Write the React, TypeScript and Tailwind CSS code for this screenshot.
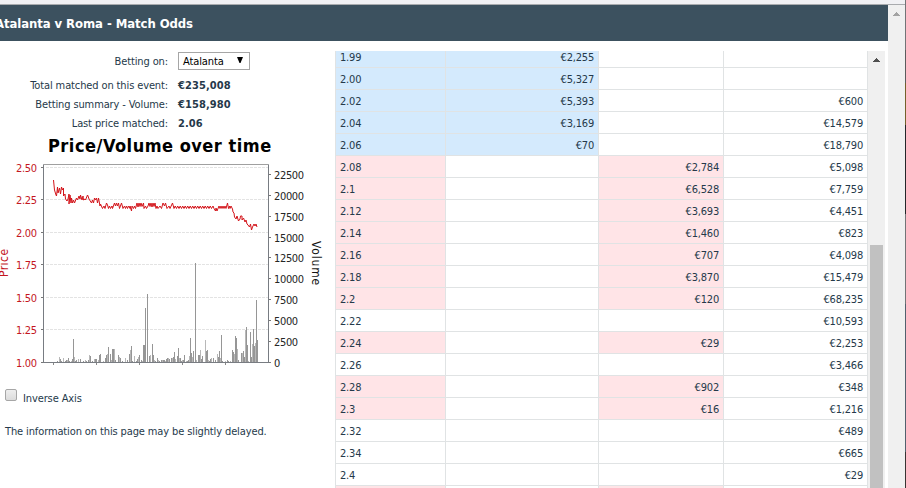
import React from "react";

type Side = "back" | "lay" | "none";
type Row = [price: string, side: Side, amount: string, traded: string];

const rows: Row[] = [
  ["1.99", "back", "€2,255", ""],
  ["2.00", "back", "€5,327", ""],
  ["2.02", "back", "€5,393", "€600"],
  ["2.04", "back", "€3,169", "€14,579"],
  ["2.06", "back", "€70", "€18,790"],
  ["2.08", "lay", "€2,784", "€5,098"],
  ["2.1", "lay", "€6,528", "€7,759"],
  ["2.12", "lay", "€3,693", "€4,451"],
  ["2.14", "lay", "€1,460", "€823"],
  ["2.16", "lay", "€707", "€4,098"],
  ["2.18", "lay", "€3,870", "€15,479"],
  ["2.2", "lay", "€120", "€68,235"],
  ["2.22", "none", "", "€10,593"],
  ["2.24", "lay", "€29", "€2,253"],
  ["2.26", "none", "", "€3,466"],
  ["2.28", "lay", "€902", "€348"],
  ["2.3", "lay", "€16", "€1,216"],
  ["2.32", "none", "", "€489"],
  ["2.34", "none", "", "€665"],
  ["2.4", "none", "", "€29"],
  ["", "lay", "", ""],
];

// Volume bars as [x, height] in plot pixels.
const bars: [number, number][] = [
  [57, 1], [59, 5], [60, 3], [61, 1], [63, 4], [65, 1], [66, 2], [67, 2], [68, 4], [69, 1], [71, 1], [72, 3],
  [73, 23], [74, 5], [75, 1], [76, 2], [78, 3], [80, 3], [83, 1], [85, 2], [86, 1], [88, 2], [89, 7], [90, 6],
  [92, 1], [94, 3], [95, 3], [96, 3], [98, 2], [99, 7], [100, 8], [103, 1], [105, 4], [106, 7], [107, 8],
  [108, 15], [110, 8], [111, 2], [112, 13], [113, 13], [114, 13], [115, 2], [118, 7], [119, 5], [120, 4],
  [122, 1], [125, 4], [127, 2], [129, 8], [130, 12], [131, 16], [132, 1], [134, 6], [136, 1], [137, 3],
  [138, 5], [139, 7], [141, 2], [142, 1], [143, 17], [144, 17], [145, 54], [147, 68], [149, 6], [150, 7],
  [152, 18], [153, 7], [154, 2], [155, 1], [157, 4], [158, 2], [159, 1], [161, 2], [162, 2], [163, 2],
  [164, 2], [165, 1], [166, 3], [167, 4], [168, 4], [169, 3], [171, 4], [172, 4], [173, 5], [174, 10],
  [175, 3], [177, 6], [178, 14], [179, 4], [180, 4], [181, 1], [182, 2], [183, 2], [184, 7], [186, 1],
  [187, 1], [188, 2], [189, 6], [190, 24], [191, 9], [192, 5], [193, 11], [195, 99], [196, 2], [198, 7],
  [199, 7], [200, 12], [201, 3], [202, 6], [205, 22], [206, 11], [207, 12], [208, 2], [209, 1], [210, 3],
  [211, 4], [213, 4], [215, 2], [217, 8], [218, 5], [219, 11], [220, 4], [221, 27], [222, 1], [225, 1],
  [227, 2], [228, 1], [230, 1], [232, 12], [233, 10], [234, 8], [235, 26], [236, 24], [237, 13], [238, 2],
  [241, 9], [242, 9], [243, 11], [244, 5], [245, 32], [246, 35], [247, 17], [248, 1], [250, 30], [251, 5],
  [252, 18], [253, 33], [254, 16], [255, 19], [256, 62], [257, 22],
];

// Price line: the opening move, the flat middle and the closing drift.
const pricePath =
  "M53.5 180 L54.5 190 L56 195 L56.5 196 L57.5 187 L58 193 L59.5 188 L60.5 194 L61.5 187 L62.5 190 L63.5 188 " +
  "V196 L65 194 L65.5 199 L67 201 L68 199 L69 194 V204 L70 195 L71 203 L71.5 198 L72.5 203 L73.5 200 L74.5 203 " +
  "L76.5 198 L77.5 200 L79 196 L80 199 L80.5 195 L82 200 L83 196 L83.5 200 L85 199 L85.5 200 L87.5 195 L88 196 " +
  "L89 199 L91.5 203 L92.5 200 L93.5 203 L94.5 198 L95.5 200 L96.5 198 L97.5 203 L98.5 198 L100 206 L100.5 204 " +
  "L102.5 208.5 L104 206 L105 208.5 L106.5 203 L107.5 205 L108.5 208.5 L109.5 206 L110.5 208.5 L112 206 L112.5 208.5 " +
  "L114.5 203 L115.5 206 L116.5 203 L117.5 206 L118.5 203 L119.5 208.5 L121.5 203 L123 208.5 L124.5 206 L125.5 208.5 " +
  "L126.5 206 L127.5 208.5 L128.5 206 L130 208.5 V206 L131.5 211 L132 206 L133.5 208.5 L134.5 206 L135.5 208.5 L137 203 " +
  "L138 207 L139 203 L140 206.5 L141 203 L142 206.5 L143.5 203 L144 208.5 L145.5 206 L146.5 208.5 L148 206 L149 203 " +
  "L150 206.5 L151 203 L152 207 L153 203 L154 206.5 L155 203 L156 208.5 L157 206 L158 208.5 L160 206 L161.5 208.5 " +
  "L163 203 L164.5 206 L165.5 203 L167 208.5 L169 206 L170 208.5 L172.5 203 L174 208.5 " +
  Array.from({ length: 15 }, (_, i) => `L${175.2 + i * 2.5} 206 L${176.5 + i * 2.5} 208.5 `).join("") +
  "L213 206 L214 208.5 L215.5 211 L216 208 L217 211 L219 206 L220 208.5 L221 206 L222 208.5 L223 206 L224 208.5 L225 206 " +
  "L226 208.5 L227.5 203 L228.5 208.5 L229.5 206 L230 208.5 L231 206 L232.5 209 L233 212 L234 213 L234.5 217 L236 219 " +
  "L237 216 L238.5 221 L240 219 L240.5 216 L242 216 V220 L243.5 218 L245 222 L246 220 L247 224 L248 225 " +
  "L249.5 227 L250.5 224 L251.5 230 L252.5 227 L254 224 L255 226 L256 224 L257 227";

const priceTicks: [string, number][] = [
  ["2.50", 167.5], ["2.25", 199.5], ["2.00", 232.5], ["1.75", 264.5], ["1.50", 297.5], ["1.25", 329.5], ["1.00", 362.5],
];
const volumeTicks: [string, number][] = [
  ["22500", 174.5], ["20000", 195.5], ["17500", 216.5], ["15000", 237.5], ["12500", 257.5],
  ["10000", 278.5], ["7500", 299.5], ["5000", 320.5], ["2500", 341.5], ["0", 362.5],
];

function Chart() {
  return (
    <svg
      width="334"
      height="242"
      viewBox="0 134 334 242"
      className="block font-['DejaVu_Sans_Condensed','DejaVu_Sans',sans-serif] text-[11px]"
    >
      <text x="48" y="152.4" textLength="223" className="text-[18px] font-bold">
        Price/Volume over time
      </text>
      {priceTicks.slice(0, 6).map(([t, y]) => (
        <line key={t} x1="46" x2="268" y1={y} y2={y} stroke="#e3e3e3" strokeDasharray="3 1" />
      ))}
      <path d="M43.5 164.5H268.5" fill="none" stroke="#a0a0a0" />
      <path d="M43.5 164.5V362.5M41 362.5H271M268.5 164.5V362.5" stroke="#787c82" />
      {priceTicks.map(([t, y]) => (
        <g key={t}>
          <line x1="41" x2="43" y1={y} y2={y} stroke="#777" />
          <text x="16" y={y + 4} textLength="21" fill="#c4171f">{t}</text>
        </g>
      ))}
      {volumeTicks.map(([t, y]) => (
        <g key={t}>
          <line x1="269" x2="271" y1={y} y2={y} stroke="#777" />
          <text x="274" y={y + 4} textLength={t.length * 6} fill="#252525">{t}</text>
        </g>
      ))}
      {[53, 96, 139, 182, 225].map((x) => (
        <rect key={x} x={x} y="363" width="1" height="2" fill="#888" />
      ))}
      {bars.map(([x, h], i) => (
        <rect key={x} x={x} y={362 - h} width="1" height={h} fill={i % 3 === 1 && h < 50 ? "#b8b8b8" : "#969696"} />
      ))}
      <path d={pricePath} fill="none" stroke="#d3141a" strokeWidth="1" />
      <text transform="translate(8 277) rotate(-90)" textLength="28" fill="#c4171f" className="text-[12px]">Price</text>
      <text transform="translate(312 241) rotate(90)" textLength="44" fill="#151515" className="text-[12px]">Volume</text>
    </svg>
  );
}

function Summary({ label, value }: { label: string; value: string }) {
  return (
    <div className="flex h-[19px] items-center">
      <div className="w-[168px] text-right">{label}</div>
      <div className="ml-[10px] text-[11px] font-bold tracking-[0.1px]">{value}</div>
    </div>
  );
}

function LadderRow({ row: [price, side, amount, traded] }: { row: Row }) {
  const tint = side === "back" ? "bg-[#d4eafd]" : side === "lay" ? "bg-[#ffe4e7]" : "bg-white";
  const cell = "border-r border-b border-[#e0e3e4] h-[22px] leading-[24px]";
  return (
    <div className="grid shrink-0 grid-cols-[110px_153px_125px_144px]">
      <div className={`${cell} ${tint} pl-1`}>{price}</div>
      <div className={`${cell} pr-1 text-right ${side === "back" ? tint : "bg-white"}`}>{side === "back" ? amount : ""}</div>
      <div className={`${cell} pr-1 text-right ${side === "lay" ? tint : "bg-white"}`}>{side === "lay" ? amount : ""}</div>
      <div className={`${cell} pr-1 text-right`}>{traded}</div>
    </div>
  );
}

function UpArrow({ color }: { color: string }) {
  return (
    <svg width="7" height="4" viewBox="0 0 7 4" fill={color} shapeRendering="crispEdges">
      <path d="M3 0h1v1h1v1h1v1h1v1H0V3h1V2h1V1h1z" />
    </svg>
  );
}

export default function App() {
  return (
    <div className="flex h-[488px] w-[906px] overflow-hidden bg-white font-['DejaVu_Sans_Condensed','DejaVu_Sans',sans-serif] text-[11px] tracking-[-0.12px] text-[#25394a]">
      <div className="flex w-[905px] flex-col">
        <div className="h-[5px] shrink-0 border-b border-[#a9abae] bg-[#f1f1f4]" />
        <div className="flex min-h-0 flex-1">
          <div className="flex w-[888px] flex-col">
            <header className="flex h-9 shrink-0 items-center bg-[#3c515f]">
              <h1 className="mt-0.5 -ml-[5px] whitespace-nowrap text-[13px] font-bold tracking-[-0.08px] text-white">
                Atalanta v Roma - Match Odds
              </h1>
            </header>
            <div className="flex min-h-0 flex-1">
              <section className="flex w-[335px] flex-col pt-[8px]">
                <div className="mb-[2px] flex h-[26px] items-center">
                  <div className="w-[168px] text-right">Betting on:</div>
                  <div className="mb-[3px] ml-[10px] flex h-[18px] w-[72px] items-center justify-between border border-[#a6a6a6] bg-white pr-[6px] pl-1 text-black">
                    <span className="mt-[3px]">Atalanta</span>
                    <svg width="6" height="6" viewBox="0 0 6 6" className="mb-px"><path d="M0 0h6L3.5 6h-1z" /></svg>
                  </div>
                </div>
                <Summary label="Total matched on this event:" value="€235,008" />
                <Summary label="Betting summary - Volume:" value="€158,980" />
                <Summary label="Last price matched:" value="2.06" />
                <Chart />
                <div className="mt-[13px] flex h-[17px] items-center pl-[5px]">
                  <span className="mb-[5px] h-3 w-3 rounded-[2px] border border-[#a6a6a6] bg-linear-to-b from-[#eeeeee] to-[#dcdcdc]" />
                  <span className="mt-[4px] ml-[6px]">Inverse Axis</span>
                </div>
                <p className="mt-[17px] pl-[5px] leading-[17px]">The information on this page may be slightly delayed.</p>
              </section>
              <section className="mt-[10px] flex w-[550px] overflow-hidden tracking-[-0.2px]">
                <div className="flex w-[533px] flex-col overflow-hidden border-l border-[#e0e3e4]">
                  <div className="-mt-[5px] flex flex-col">
                    {rows.map((r, i) => <LadderRow key={i} row={r} />)}
                  </div>
                </div>
                <div className="flex w-[17px] flex-col items-center bg-[#f0f0f0] pt-[7px]">
                  <UpArrow color="#505050" />
                  <div className="mt-[183px] w-[13px] flex-1 bg-[#c1c1c1]" />
                </div>
              </section>
            </div>
          </div>
          <div className="flex w-[17px] flex-col items-center bg-[#f0f0f0] pt-[7px]">
            <UpArrow color="#a3a3a3" />
          </div>
        </div>
      </div>
      <div className="flex w-px flex-col">
        <div className="h-[50px] bg-[#737477]" />
        <div className="h-[33px] bg-[#5c5c5d]" />
        <div className="h-[42px] bg-[#75602b]" />
        <div className="h-[89px] bg-[#242629]" />
        <div className="h-[90px] bg-[#737477]" />
        <div className="h-[148px] bg-[#52606d]" />
        <div className="flex-1 bg-[#393332]" />
      </div>
    </div>
  );
}
